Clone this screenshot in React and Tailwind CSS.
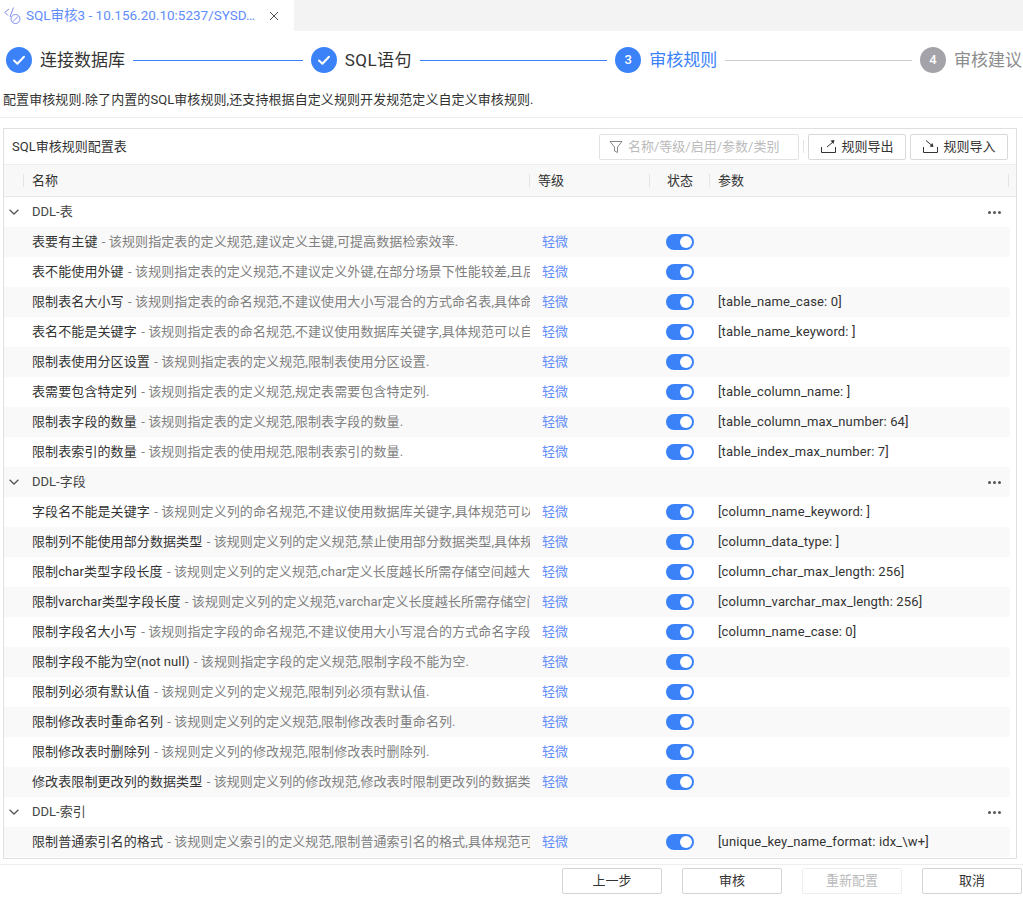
const groups = [
  {
    name: "DDL-表",
    rules: [
      ["表要有主键", "该规则指定表的定义规范,建议定义主键,可提高数据检索效率.", ""],
      ["表不能使用外键", "该规则指定表的定义规范,不建议定义外键,在部分场景下性能较差,且后期维护成本较高.", ""],
      ["限制表名大小写", "该规则指定表的命名规范,不建议使用大小写混合的方式命名表,具体命名规范可以自定义设置.", "[table_name_case: 0]"],
      ["表名不能是关键字", "该规则指定表的命名规范,不建议使用数据库关键字,具体规范可以自定义设置.", "[table_name_keyword: ]"],
      ["限制表使用分区设置", "该规则指定表的定义规范,限制表使用分区设置.", ""],
      ["表需要包含特定列", "该规则指定表的定义规范,规定表需要包含特定列.", "[table_column_name: ]"],
      ["限制表字段的数量", "该规则指定表的定义规范,限制表字段的数量.", "[table_column_max_number: 64]"],
      ["限制表索引的数量", "该规则指定表的使用规范,限制表索引的数量.", "[table_index_max_number: 7]"],
    ],
  },
  {
    name: "DDL-字段",
    rules: [
      ["字段名不能是关键字", "该规则定义列的命名规范,不建议使用数据库关键字,具体规范可以自定义设置.", "[column_name_keyword: ]"],
      ["限制列不能使用部分数据类型", "该规则定义列的定义规范,禁止使用部分数据类型,具体规范可以自定义设置.", "[column_data_type: ]"],
      ["限制char类型字段长度", "该规则定义列的定义规范,char定义长度越长所需存储空间越大,性能越差.", "[column_char_max_length: 256]"],
      ["限制varchar类型字段长度", "该规则定义列的定义规范,varchar定义长度越长所需存储空间越大,性能越差.", "[column_varchar_max_length: 256]"],
      ["限制字段名大小写", "该规则指定字段的命名规范,不建议使用大小写混合的方式命名字段,具体规范可以自定义设置.", "[column_name_case: 0]"],
      ["限制字段不能为空(not null)", "该规则指定字段的定义规范,限制字段不能为空.", ""],
      ["限制列必须有默认值", "该规则定义列的定义规范,限制列必须有默认值.", ""],
      ["限制修改表时重命名列", "该规则定义列的定义规范,限制修改表时重命名列.", ""],
      ["限制修改表时删除列", "该规则定义列的修改规范,限制修改表时删除列.", ""],
      ["修改表限制更改列的数据类型", "该规则定义列的修改规范,修改表时限制更改列的数据类型.", ""],
    ],
  },
  {
    name: "DDL-索引",
    rules: [
      ["限制普通索引名的格式", "该规则定义索引的定义规范,限制普通索引名的格式,具体规范可以自定义设置.", "[unique_key_name_format: idx_\\w+]"],
    ],
  },
];

const steps = [
  { label: "连接数据库", state: "done" },
  { label: "SQL语句", state: "done", extra: "tracking-[0.5px]" },
  { label: "审核规则", state: "active", num: 3 },
  { label: "审核建议", state: "todo", num: 4 },
];

function Step({ step, last, nextDone }) {
  const circle = step.state === "todo" ? "bg-[#a3a3a9]" : "bg-[#3b82f9]";
  const text =
    step.state === "done" ? "text-[#333333]" : step.state === "active" ? "text-[#3b82f9]" : "text-[#8c8c8c]";
  return (
    <div className="flex items-center w-[304.67px] shrink-0">
      <div className={`w-[26px] h-[26px] rounded-full flex items-center justify-center shrink-0 text-white text-[13px] font-medium ${circle}`}>
        {step.state === "done" ? (
          <svg width="16" height="16" viewBox="0 0 16 16" fill="none" stroke="#fff" strokeWidth="2" strokeLinecap="round" strokeLinejoin="round">
            <path d="M3 8.5l3.4 3.2L13 4.8" />
          </svg>
        ) : (
          step.num
        )}
      </div>
      <span className={`ml-2 text-[17px] leading-[26px] whitespace-nowrap ${text} ${step.extra || ""}`}>{step.label}</span>
      {!last && <div className={`flex-1 h-px mx-2 ${nextDone ? "bg-[#3b82f9]" : "bg-[#cccccc]"}`} />}
    </div>
  );
}

function Toggle() {
  return (
    <div className="w-[28px] h-[16px] rounded-full bg-[#3b82f9] flex items-center justify-end pr-[2px]">
      <div className="w-[12px] h-[12px] rounded-full bg-white" />
    </div>
  );
}

function Chevron() {
  return (
    <svg width="10" height="6" viewBox="0 0 10 6" fill="none" stroke="#555" strokeWidth="1.3">
      <path d="M.6.8 5 5l4.4-4.2" />
    </svg>
  );
}

function Sep({ className }) {
  return <div className={`w-px h-[13px] bg-[#e4e4e4] shrink-0 ${className || ""}`} />;
}

function TrayIcon({ down }) {
  return (
    <svg width="17" height="15" viewBox="0 0 17 15" fill="none" stroke="#333" strokeWidth="1">
      <path d="M1.5 8v5.5h14V8" />
      {down ? (
        <>
          <path d="M4 1.5l6 5" />
          <path d="M11.5 8l-4-.4 3-3.6z" fill="#333" stroke="none" />
        </>
      ) : (
        <>
          <path d="M7 8l6-5" />
          <path d="M14.5 1l-4 .4 3 3.6z" fill="#333" stroke="none" />
        </>
      )}
    </svg>
  );
}

function ToolButton({ w, down, children }) {
  return (
    <button className={`h-[26px] border border-[#d9d9d9] rounded-[2px] flex items-center justify-center gap-[4px] text-[13px] text-[#333333] ${w}`}>
      <TrayIcon down={down} />
      {children}
    </button>
  );
}

function FooterButton({ disabled, children }) {
  return (
    <button className={`w-[100px] h-[26px] rounded-[2px] border text-[13px] ${disabled ? "border-[#eeeeee] text-[#bbbbbb]" : "border-[#d4d4d4] text-[#333333]"}`}>
      {children}
    </button>
  );
}

export default function App() {
  let rowIndex = 0;
  const stripe = () => (rowIndex++ % 2 === 1 ? "bg-[#f9f9f9]" : "bg-white");

  return (
    <div className="w-[1023px] h-[898px] overflow-hidden bg-white text-[13px] text-[#333333] font-['Roboto','Noto_Sans_CJK_SC',sans-serif]">
      {/* tab bar */}
      <div className="h-[31px] bg-[#f3f3f3] flex">
        <div className="w-[294px] bg-white flex items-center pl-[4px]">
          <svg width="18" height="18" viewBox="0 0 18 18" fill="none" stroke="#7f8ef2" strokeWidth="1">
            <path d="M5 2 .8 5.2 4 8.5M9.5 .5 6 10" />
            <circle cx="11.5" cy="12" r="4.5" />
            <path d="M9 14.5l5-5" />
          </svg>
          <span className="ml-[4px] w-[236px] whitespace-nowrap text-[13.5px] text-[#5f8dfb]">SQL审核3 - 10.156.20.10:5237/SYSD…</span>
          <svg className="ml-[7px]" width="10" height="10" viewBox="0 0 10 10" stroke="#555" strokeWidth="1">
            <path d="M1 1l8 8M9 1l-8 8" />
          </svg>
        </div>
      </div>

      {/* steps */}
      <div className="flex pl-[6px] mt-[16px] h-[26px]">
        {steps.map((s, i) => (
          <Step key={s.label} step={s} last={i === steps.length - 1} nextDone={i < 2} />
        ))}
      </div>

      <div className="pl-[3px] mt-[17px] h-[20px] leading-[20px] whitespace-nowrap tracking-[0.08px]">
        配置审核规则.除了内置的SQL审核规则,还支持根据自定义规则开发规范定义自定义审核规则.
      </div>
      <div className="h-px bg-[#eeeeee] mt-[7px]" />

      {/* rule table */}
      <div className="ml-[3px] mt-[10px] w-[1014px] h-[731px] border border-[#e0e0e0] overflow-hidden">
        <div className="h-[36px] border-b border-[#eeeeee] flex items-center pl-[8px] pr-[8px]">
          <span className="flex-1">SQL审核规则配置表</span>
          <div className="w-[200px] h-[26px] border border-[#e2e2e2] rounded-[2px] flex items-center pl-[9px] text-[#bbbbbb]">
            <svg width="14" height="14" viewBox="0 0 14 14" fill="none" stroke="#888" strokeWidth="1">
              <path d="M1 1.5h12L8.5 7v5.5l-3-1.5V7z" />
            </svg>
            <span className="ml-[5px]">名称/等级/启用/参数/类别</span>
          </div>
          <Sep className="mx-[4px]" />
          <ToolButton w="w-[98px]">规则导出</ToolButton>
          <div className="w-[4px]" />
          <ToolButton w="w-[98px]" down>规则导入</ToolButton>
        </div>

        <div className="h-[32px] bg-[#f8f8f8] border-b border-[#e8e8e8] flex items-center">
          <div className="w-[526px] flex items-center pl-[19px] shrink-0">
            <Sep />
            <span className="ml-[8px]">名称</span>
          </div>
          <div className="w-[120px] flex items-center shrink-0 -ml-px">
            <Sep />
            <span className="ml-[8px]">等级</span>
          </div>
          <div className="w-[60px] flex items-center shrink-0">
            <Sep />
            <span className="ml-[17px]">状态</span>
          </div>
          <div className="w-[300px] flex items-center justify-between shrink-0">
            <div className="flex items-center">
              <Sep />
              <span className="ml-[8px]">参数</span>
            </div>
            <Sep />
          </div>
        </div>

        <div className="w-[1006px]">
          {groups.map((g) => (
            <div key={g.name}>
              <div className={`h-[30px] flex items-center ${stripe()}`}>
                <div className="w-[28px] pl-[5px] flex items-center">
                  <Chevron />
                </div>
                <span className="text-[#444444] flex-1">{g.name}</span>
                <div className="flex gap-[2px] mr-[9px]">
                  <span className="w-[3px] h-[3px] bg-[#555555] rounded-full" />
                  <span className="w-[3px] h-[3px] bg-[#555555] rounded-full" />
                  <span className="w-[3px] h-[3px] bg-[#555555] rounded-full" />
                </div>
              </div>
              {g.rules.map(([name, desc, param]) => (
                <div key={name} className={`h-[30px] flex items-center ${stripe()}`}>
                  <div className="w-[526px] pl-[28px] shrink-0 overflow-hidden whitespace-nowrap tracking-[0.1px]">
                    <span>{name}</span>
                    <span className="text-[#808080] ml-px"> - {desc}</span>
                  </div>
                  <div className="w-[120px] pl-[12px] shrink-0 text-[#5f8dfb]">轻微</div>
                  <div className="w-[60px] pl-[16px] shrink-0">
                    <Toggle />
                  </div>
                  <div className="pl-[8px] whitespace-nowrap tracking-[0.14px]">{param}</div>
                </div>
              ))}
            </div>
          ))}
        </div>
      </div>

      {/* footer */}
      <div className="h-px bg-[#eeeeee] mt-[5px]" />
      <div className="flex justify-end gap-[20px] pr-px mt-[3px]">
        <FooterButton>上一步</FooterButton>
        <FooterButton>审核</FooterButton>
        <FooterButton disabled>重新配置</FooterButton>
        <FooterButton>取消</FooterButton>
      </div>
    </div>
  );
}
